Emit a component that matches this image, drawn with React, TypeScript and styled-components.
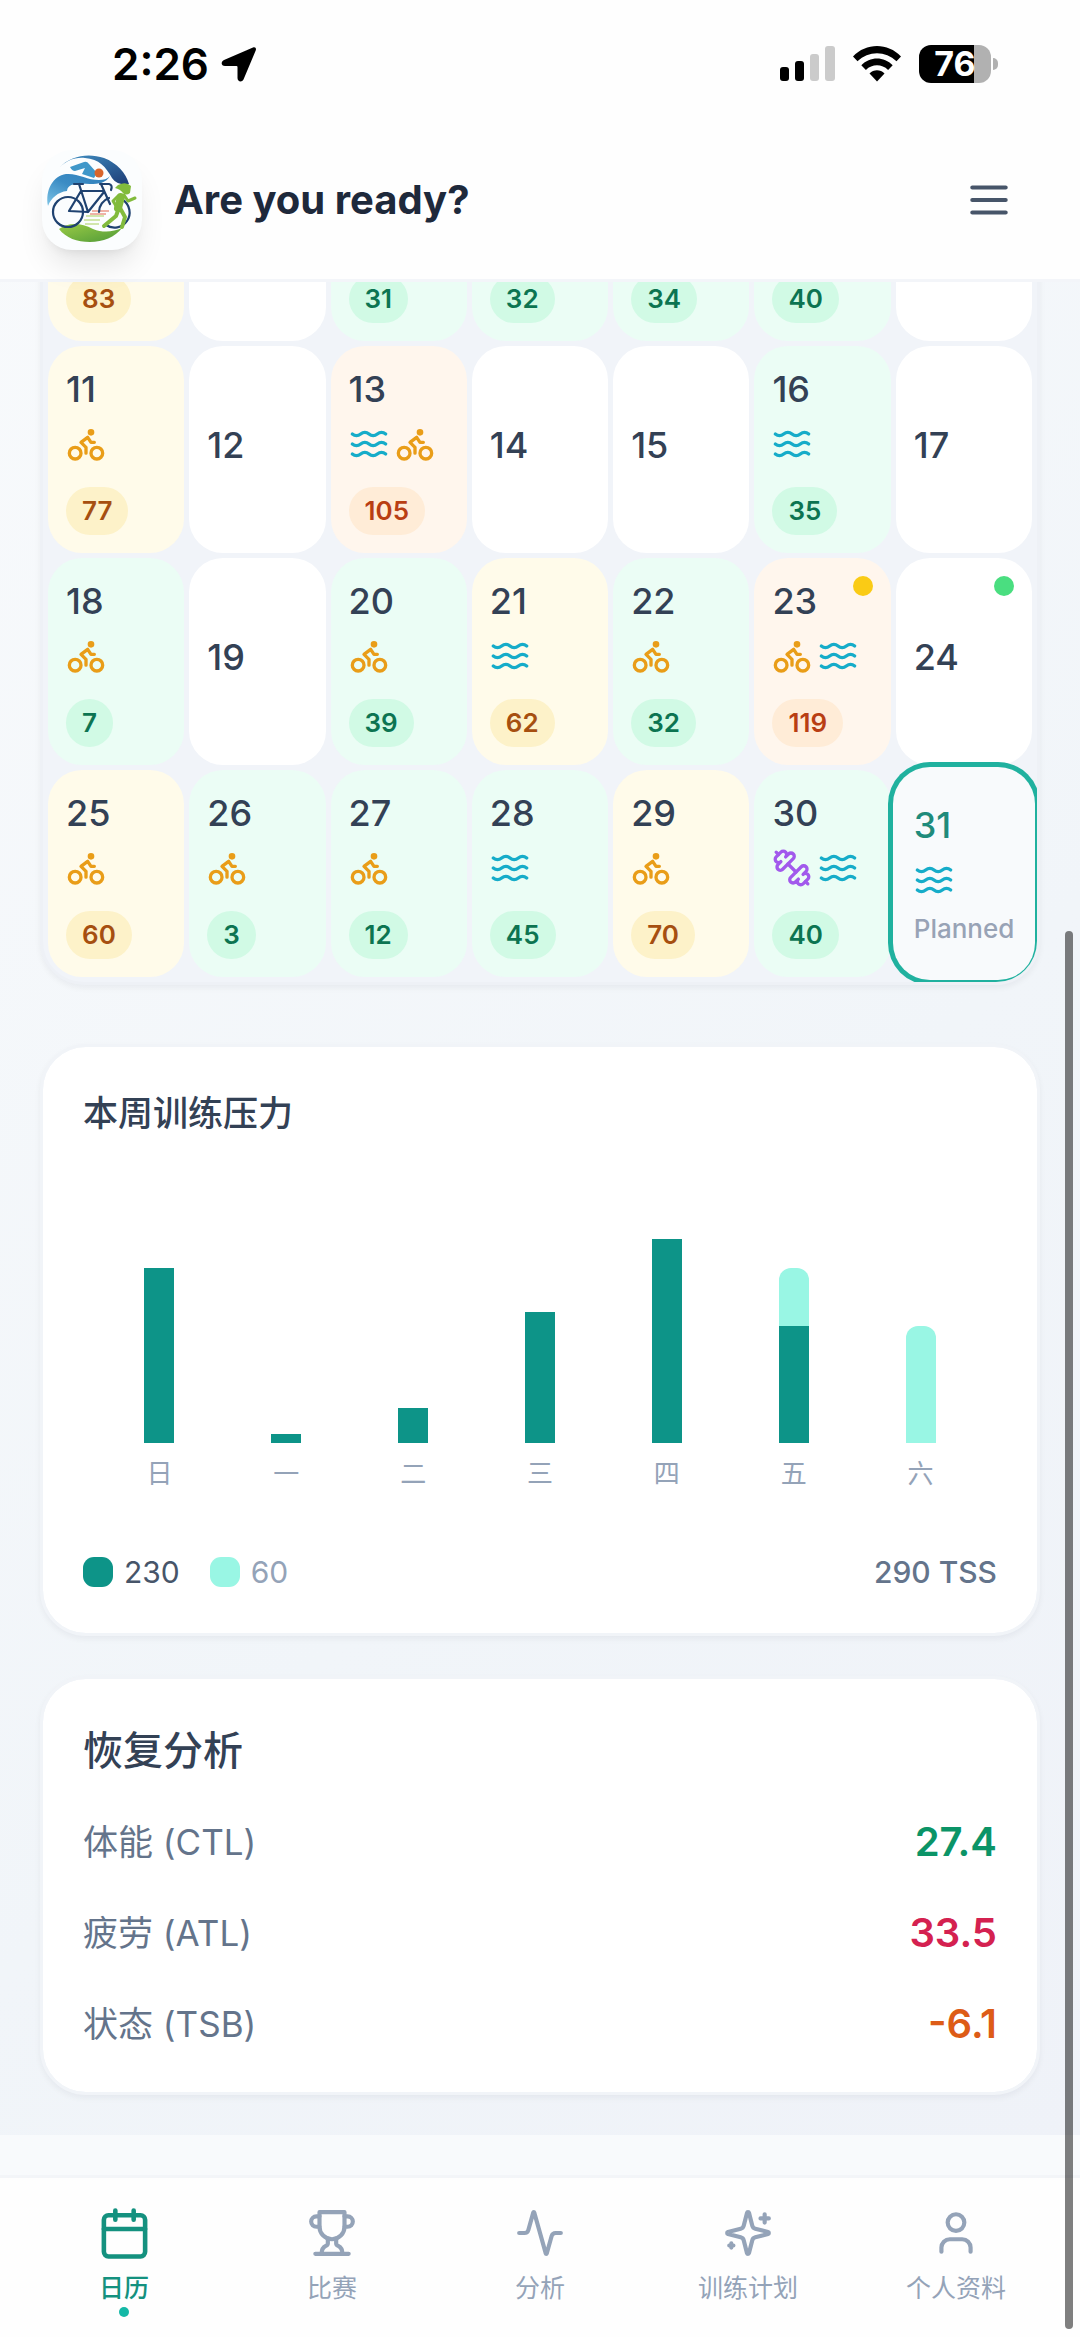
import React, { useLayoutEffect, useRef } from 'react';
import styled, { createGlobalStyle, css } from 'styled-components';

const GlobalStyle = createGlobalStyle`
  * { box-sizing: border-box; }
  html, body { margin: 0; padding: 0; }
  body {
    background: #f8fafc;
    color: #334155;
    font-family: Inter, "Noto Sans CJK SC", sans-serif;
    -webkit-font-smoothing: antialiased;
  }
  button { font: inherit; color: inherit; border: 0; background: none; padding: 0; cursor: pointer; }
  h1, h2, p, dl, dt, dd, ul { margin: 0; padding: 0; }
  svg { display: block; flex: none; }
`;

/* ---------- icons ---------- */

type IconName =
  | 'bike' | 'swim' | 'gym' | 'menu'
  | 'calendar' | 'trophy' | 'activity' | 'sparkles' | 'user';

const shapes: Record<IconName, React.ReactNode> = {
  bike: (
    <>
      <circle cx="18.5" cy="17.5" r="3.5" />
      <circle cx="5.5" cy="17.5" r="3.5" />
      <circle cx="15" cy="5" r="1" />
      <path d="M12 17.5V14l-3-3 4-3 2 3h2" />
    </>
  ),
  swim: (
    <>
      <path d="M2 6c.6.5 1.2 1 2.5 1C7 7 7 5 9.5 5c2.6 0 2.4 2 5 2 2.5 0 2.5-2 5-2 1.3 0 1.9.5 2.5 1" />
      <path d="M2 12c.6.5 1.2 1 2.5 1 2.5 0 2.5-2 5-2 2.6 0 2.4 2 5 2 2.5 0 2.5-2 5-2 1.3 0 1.9.5 2.5 1" />
      <path d="M2 18c.6.5 1.2 1 2.5 1 2.5 0 2.5-2 5-2 2.6 0 2.4 2 5 2 2.5 0 2.5-2 5-2 1.3 0 1.9.5 2.5 1" />
    </>
  ),
  gym: (
    <>
      <path d="M14.4 14.4 9.6 9.6" />
      <path d="M18.657 21.485a2 2 0 1 1-2.829-2.828l-1.767 1.768a2 2 0 1 1-2.829-2.829l6.364-6.364a2 2 0 1 1 2.829 2.829l-1.768 1.767a2 2 0 1 1 2.828 2.829z" />
      <path d="m21.5 21.5-1.4-1.4" />
      <path d="M3.9 3.9 2.5 2.5" />
      <path d="M6.404 12.768a2 2 0 1 1-2.829-2.829l1.768-1.767a2 2 0 1 1-2.828-2.829l2.828-2.828a2 2 0 1 1 2.829 2.828l1.767-1.768a2 2 0 1 1 2.829 2.829z" />
    </>
  ),
  menu: <path d="M4 6h16M4 12h16M4 18h16" />,
  calendar: (
    <>
      <path d="M8 2v4M16 2v4M3 10h18" />
      <rect width="18" height="18" x="3" y="4" rx="2" />
    </>
  ),
  trophy: (
    <>
      <path d="M6 9H4.5a2.5 2.5 0 0 1 0-5H6M18 9h1.5a2.5 2.5 0 0 0 0-5H18M4 22h16" />
      <path d="M10 14.66V17c0 .55-.47.98-.97 1.21C7.85 18.75 7 20.24 7 22" />
      <path d="M14 14.66V17c0 .55.47.98.97 1.21C16.15 18.75 17 20.24 17 22" />
      <path d="M18 2H6v7a6 6 0 0 0 12 0V2Z" />
    </>
  ),
  activity: (
    <path d="M22 12h-2.48a2 2 0 0 0-1.93 1.46l-2.35 8.36a.25.25 0 0 1-.48 0L9.24 2.18a.25.25 0 0 0-.48 0l-2.35 8.36A2 2 0 0 1 4.49 12H2" />
  ),
  sparkles: (
    <>
      <path d="M9.937 15.5A2 2 0 0 0 8.5 14.063l-6.135-1.582a.5.5 0 0 1 0-.962L8.5 9.936A2 2 0 0 0 9.937 8.5l1.582-6.135a.5.5 0 0 1 .963 0L14.063 8.5A2 2 0 0 0 15.5 9.937l6.135 1.581a.5.5 0 0 1 0 .964L15.5 14.063a2 2 0 0 0-1.437 1.437l-1.582 6.135a.5.5 0 0 1-.963 0z" />
      <path d="M20 3v4M22 5h-4M4 17v2M5 18H3" />
    </>
  ),
  user: (
    <>
      <path d="M19 21v-2a4 4 0 0 0-4-4H9a4 4 0 0 0-4 4v2" />
      <circle cx="12" cy="7" r="4" />
    </>
  ),
};

const iconColors: Partial<Record<IconName, string>> = {
  bike: '#e99d18',
  swim: '#16acc9',
  gym: '#a259ec',
};

function Icon({ name, size, strokeWidth = 2 }: { name: IconName; size: number; strokeWidth?: number }) {
  return (
    <svg
      width={size}
      height={size}
      viewBox="0 0 24 24"
      fill="none"
      stroke={iconColors[name] ?? 'currentColor'}
      strokeWidth={strokeWidth}
      strokeLinecap="round"
      strokeLinejoin="round"
      aria-hidden="true"
    >
      {shapes[name]}
    </svg>
  );
}

function LogoArt() {
  return (
    <svg width="100" height="100" viewBox="0 0 100 100" fill="none" aria-hidden="true">
      <defs>
        <linearGradient id="sky" x1="0" y1="0" x2="1" y2="1">
          <stop offset="0" stopColor="#3f92c6" />
          <stop offset="1" stopColor="#1f3c75" />
        </linearGradient>
        <linearGradient id="wave" x1="1" y1="0" x2="0" y2="1">
          <stop offset="0" stopColor="#2f7fbb" />
          <stop offset="0.5" stopColor="#3b8cc4" />
          <stop offset="1" stopColor="#7cc4e6" />
        </linearGradient>
        <linearGradient id="hill" x1="0" y1="0" x2="1" y2="1">
          <stop offset="0" stopColor="#9bcb45" />
          <stop offset="1" stopColor="#4f9a38" />
        </linearGradient>
      </defs>
      <path d="M17 18C29 5 47 3 62 8c13 5 22 15 25 26-6 1-13 0-17-6C64 17 57 9 43 8c-11-1-19 3-26 10Z" fill="url(#sky)" />
      <path d="M28 17 42 12q3-1 5 2l8 9-3 5-12-4 3-6-10 3q-3 0-5-4Z" fill="#3f97c9" />
      <circle cx="57" cy="23" r="4.5" fill="#d9652b" />
      <path d="M6 56C3 40 11 26 24 24c12-1 21 6 33 6 5 0 8-1 11-4-4 7-11 8-20 8-10 0-22-2-23 7-9 1-16 7-19 15Z" fill="url(#wave)" />
      <path d="M17 79c10-7 22-6 34 0 10 4 20 3 29-1-7 9-19 14-32 14S24 88 17 79Z" fill="url(#hill)" />
      <path d="M44 66h18M42 70h16M43 74h14" stroke="#a9cf5a" strokeWidth="1" />
      <path d="M50 61h17M48 64h16" stroke="#e2664f" strokeWidth="1" />
      <g stroke="#1f4270" strokeWidth="2.2" strokeLinecap="round" strokeLinejoin="round">
        <circle cx="26" cy="62" r="15" />
        <path d="M81 50a15 15 0 1 1-17 25M57 62a15 15 0 0 1 10-14" />
        <path d="M32 34h9M37 34l9 28 16-20M39 41h22M39 41 27 61l19 1M59 34l9 20M58 34h9q4 1 2 6" />
      </g>
      <g stroke="#82bb3c" strokeLinecap="round" strokeLinejoin="round">
        <path d="M79 47 76 58" strokeWidth="8" />
        <path d="M77 58l-3 8-12 10M78 58l5 9-3 10" strokeWidth="4" />
        <path d="M77 45l-6 6 3 5M82 45l4 6 7-3" strokeWidth="3" />
      </g>
      <path d="M76 35q8-4 13 1l-1 7q-4 3-7 0-3-4-8-5 2-2 3-3Z" fill="#82bb3c" />
    </svg>
  );
}

/* ---------- shell ---------- */

const Shell = styled.div`
  display: flex;
  flex-direction: column;
  height: 100vh;
  overflow: hidden;
`;

const Header = styled.header`
  position: relative;
  z-index: 1;
  flex: none;
  background: #fefefe;
  border-bottom: 3px solid #f3f5f9;
`;

const StatusBar = styled.div`
  display: flex;
  align-items: center;
  justify-content: space-between;
  height: 128px;
  padding: 0 82px 0 112px;
  color: #000;
`;

const Clock = styled.div`
  display: flex;
  align-items: center;
  gap: 12px;
  font-size: 44px;
  line-height: 52px;
  font-weight: 600;
`;

const StatusIcons = styled.div`
  display: flex;
  align-items: center;
  gap: 18px;
`;

const Battery = styled.div`
  display: flex;
  align-items: center;
  gap: 2px;
`;

const BatteryBody = styled.div`
  display: flex;
  align-items: center;
  justify-content: center;
  width: 72px;
  height: 38px;
  border-radius: 12px;
  background: linear-gradient(90deg, #000 76%, #b1b1b1 76%);
  color: #fff;
  font-size: 34px;
  line-height: 38px;
  font-weight: 700;
`;

const BatteryTip = styled.div`
  width: 5px;
  height: 12px;
  border-radius: 0 6px 6px 0;
  background: #b1b1b1;
`;

const TitleRow = styled.div`
  display: flex;
  align-items: center;
  gap: 32px;
  padding: 21px 40px 28px 42px;
`;

const Logo = styled.div`
  width: 100px;
  height: 100px;
  border-radius: 30px;
  background: #fbfdfe;
  box-shadow: 0 20px 30px -6px rgba(0, 0, 0, 0.1), 0 8px 12px -8px rgba(0, 0, 0, 0.1);
`;

const AppTitle = styled.h1`
  flex: 1;
  color: #1e293b;
  font-size: 40px;
  line-height: 52px;
  font-weight: 700;
`;

const MenuButton = styled.button`
  display: flex;
  padding: 26px;
  color: #475569;
`;

const Scroller = styled.main`
  flex: 1;
  min-height: 0;
  overflow-y: auto;
  scrollbar-width: none;
  padding-bottom: 40px;
`;

const Content = styled.div`
  display: flex;
  flex-direction: column;
  padding: 0 40px 40px;
  background: linear-gradient(135deg, #f8fafc 0%, #f1f5f9 60%, #eff2f8 100%);
`;

const ScrollThumb = styled.div`
  position: fixed;
  right: 7px;
  top: 931px;
  bottom: 8px;
  z-index: 2;
  width: 8px;
  border-radius: 4px;
  background: rgba(0, 0, 0, 0.5);
`;

/* ---------- calendar ---------- */

const Calendar = styled.section`
  display: grid;
  grid-template-columns: repeat(7, 1fr);
  grid-auto-rows: 207px;
  gap: 5px;
  padding: 5px;
  margin-bottom: 59px;
  overflow: hidden;
  border: 3px solid #eef1f6;
  border-radius: 44px;
  background: #f1f4f9;
  box-shadow: 0 3px 6px rgba(15, 23, 42, 0.05);
`;

type Tone = 'rest' | 'easy' | 'medium' | 'hard' | 'today';

const cellTones: Record<Tone, string> = {
  rest: '#ffffff',
  easy: '#ebfdf5',
  medium: '#fffbea',
  hard: '#fff6ed',
  today: '#f8fafc',
};

const badgeTones: Record<Tone, { bg: string; fg: string }> = {
  rest: { bg: '#f1f5f9', fg: '#475569' },
  easy: { bg: '#d1fae5', fg: '#0c7451' },
  medium: { bg: '#fdf2c9', fg: '#a64f10' },
  hard: { bg: '#ffecd7', fg: '#b93e13' },
  today: { bg: '#f1f5f9', fg: '#475569' },
};

const Cell = styled.button<{ $tone: Tone; $bottom?: boolean }>`
  position: relative;
  display: flex;
  flex-direction: column;
  align-items: flex-start;
  justify-content: ${(p) => (p.$bottom ? 'flex-end' : 'center')};
  min-width: 0;
  padding: 18px;
  border-radius: 34px;
  background: ${(p) => cellTones[p.$tone]};
  ${(p) =>
    p.$tone === 'today' &&
    css`
      color: #1f8b7b;
      box-shadow: 0 0 0 3px #f8fafc, 0 0 0 8px #20b19f;
    `}
`;

const DayNumber = styled.span`
  margin-bottom: 10px;
  font-size: 36px;
  line-height: 50px;
  font-weight: 500;
`;

const Sports = styled.span`
  display: flex;
  gap: 6px;
`;

const Load = styled.span<{ $tone: Tone }>`
  margin-top: 23px;
  padding: 0 16px;
  border-radius: 24px;
  background: ${(p) => badgeTones[p.$tone].bg};
  color: ${(p) => badgeTones[p.$tone].fg};
  font-size: 26px;
  line-height: 48px;
  font-weight: 600;
`;

const Planned = styled.span`
  margin-top: 10px;
  color: #98a3b6;
  font-size: 26px;
  line-height: 37px;
  font-weight: 500;
`;

const RaceDot = styled.i<{ $color: string }>`
  position: absolute;
  top: 18px;
  right: 18px;
  width: 20px;
  height: 20px;
  border-radius: 50%;
  background: ${(p) => p.$color};
`;

interface Day {
  date?: number;
  tone: Tone;
  sports?: IconName[];
  load?: number;
  dot?: string;
}

const days: Day[] = [
  { tone: 'medium', load: 83 },
  { tone: 'rest' },
  { tone: 'easy', load: 31 },
  { tone: 'easy', load: 32 },
  { tone: 'easy', load: 34 },
  { tone: 'easy', load: 40 },
  { tone: 'rest' },
  { date: 11, tone: 'medium', sports: ['bike'], load: 77 },
  { date: 12, tone: 'rest' },
  { date: 13, tone: 'hard', sports: ['swim', 'bike'], load: 105 },
  { date: 14, tone: 'rest' },
  { date: 15, tone: 'rest' },
  { date: 16, tone: 'easy', sports: ['swim'], load: 35 },
  { date: 17, tone: 'rest' },
  { date: 18, tone: 'easy', sports: ['bike'], load: 7 },
  { date: 19, tone: 'rest' },
  { date: 20, tone: 'easy', sports: ['bike'], load: 39 },
  { date: 21, tone: 'medium', sports: ['swim'], load: 62 },
  { date: 22, tone: 'easy', sports: ['bike'], load: 32 },
  { date: 23, tone: 'hard', sports: ['bike', 'swim'], load: 119, dot: '#facb15' },
  { date: 24, tone: 'rest', dot: '#4ade80' },
  { date: 25, tone: 'medium', sports: ['bike'], load: 60 },
  { date: 26, tone: 'easy', sports: ['bike'], load: 3 },
  { date: 27, tone: 'easy', sports: ['bike'], load: 12 },
  { date: 28, tone: 'easy', sports: ['swim'], load: 45 },
  { date: 29, tone: 'medium', sports: ['bike'], load: 70 },
  { date: 30, tone: 'easy', sports: ['gym', 'swim'], load: 40 },
  { date: 31, tone: 'today', sports: ['swim'] },
];

function DayCell({ day }: { day: Day }) {
  return (
    <Cell type="button" $tone={day.tone} $bottom={!day.date}>
      {day.date && <DayNumber>{day.date}</DayNumber>}
      {day.sports && (
        <Sports>
          {day.sports.map((s) => (
            <Icon key={s} name={s} size={40} />
          ))}
        </Sports>
      )}
      {day.load !== undefined && <Load $tone={day.tone}>{day.load}</Load>}
      {day.tone === 'today' && <Planned>Planned</Planned>}
      {day.dot && <RaceDot $color={day.dot} />}
    </Cell>
  );
}

/* ---------- cards ---------- */

const Card = styled.section`
  padding: 40px;
  border: 3px solid #f1f4f8;
  border-radius: 46px;
  background: #fff;
  background-clip: padding-box;
  box-shadow: 0 3px 6px rgba(15, 23, 42, 0.05);

  & + & {
    margin-top: 40px;
  }
`;

const ChartTitle = styled.h2`
  font-size: 35px;
  line-height: 52px;
  font-weight: 500;
`;

const Chart = styled.div`
  display: grid;
  grid-template-columns: repeat(7, 1fr);
  margin: 40px 13px 59px;
`;

const ChartColumn = styled.div`
  display: flex;
  flex-direction: column;
  align-items: center;
  justify-content: flex-end;
  height: 313px;
`;

const Bar = styled.div<{ $planned?: boolean }>`
  width: 30px;
  background: ${(p) => (p.$planned ? '#99f6e4' : '#0d9488')};
  border-radius: ${(p) => (p.$planned ? '12px 12px 0 0' : '0')};
`;

const Weekday = styled.span`
  margin-top: 13px;
  color: #94a3b8;
  font-size: 26px;
  line-height: 36px;
`;

const ChartFooter = styled.div`
  display: flex;
  align-items: center;
  justify-content: space-between;
  font-size: 30px;
  line-height: 42px;
`;

const Legend = styled.div`
  display: flex;
  gap: 30px;
`;

const LegendItem = styled.span<{ $planned?: boolean }>`
  display: flex;
  align-items: center;
  gap: 11px;
  color: ${(p) => (p.$planned ? '#94a3b8' : '#475569')};

  &::before {
    content: '';
    width: 30px;
    height: 30px;
    border-radius: 11px;
    background: ${(p) => (p.$planned ? '#99f6e4' : '#0d9488')};
  }
`;

const Total = styled.strong`
  color: #64748b;
  font-weight: 500;
`;

const PX_PER_TSS = 2.92;

const week = [
  { label: '日', done: 60, planned: 0 },
  { label: '一', done: 3, planned: 0 },
  { label: '二', done: 12, planned: 0 },
  { label: '三', done: 45, planned: 0 },
  { label: '四', done: 70, planned: 0 },
  { label: '五', done: 40, planned: 20 },
  { label: '六', done: 0, planned: 40 },
];

const doneTotal = week.reduce((sum, d) => sum + d.done, 0);
const plannedTotal = week.reduce((sum, d) => sum + d.planned, 0);

const RecoveryTitle = styled.h2`
  margin-bottom: 31px;
  font-size: 40px;
  line-height: 64px;
  font-weight: 500;
`;

const Metrics = styled.dl`
  display: flex;
  flex-direction: column;
  gap: 35px;
`;

const Metric = styled.div`
  display: flex;
  align-items: center;
  justify-content: space-between;
`;

const MetricName = styled.dt`
  color: #64748b;
  font-size: 35px;
  line-height: 56px;
`;

const MetricValue = styled.dd<{ $color: string }>`
  color: ${(p) => p.$color};
  font-size: 40px;
  line-height: 56px;
  font-weight: 600;
`;

const metrics = [
  { name: '体能 (CTL)', value: '27.4', color: '#0b9467' },
  { name: '疲劳 (ATL)', value: '33.5', color: '#d42150' },
  { name: '状态 (TSB)', value: '-6.1', color: '#dd5c17' },
];

/* ---------- bottom navigation ---------- */

const Nav = styled.nav`
  flex: none;
  display: grid;
  grid-template-columns: repeat(5, 1fr);
  height: 162px;
  padding: 27px 20px 0;
  border-top: 3px solid #f3f5f8;
  background: #fefefe;
`;

const NavLink = styled.a<{ $active?: boolean }>`
  display: flex;
  flex-direction: column;
  align-items: center;
  color: ${(p) => (p.$active ? '#14917f' : '#94a3b8')};
  font-size: 25px;
  line-height: 30px;
  font-weight: ${(p) => (p.$active ? 500 : 400)};
  text-decoration: none;
`;

const NavIcon = styled.span`
  display: flex;
  align-items: center;
  height: 56px;
  margin-bottom: 12px;
`;

const ActiveDot = styled.i`
  width: 10px;
  height: 10px;
  margin-top: 4px;
  border-radius: 50%;
  background: #14b8a6;
`;

const tabs: { icon: IconName; label: string; active?: boolean }[] = [
  { icon: 'calendar', label: '日历', active: true },
  { icon: 'trophy', label: '比赛' },
  { icon: 'activity', label: '分析' },
  { icon: 'sparkles', label: '训练计划' },
  { icon: 'user', label: '个人资料' },
];

export default function App() {
  const scroller = useRef<HTMLElement>(null);

  useLayoutEffect(() => {
    const el = scroller.current;
    if (el) el.scrollTop = el.scrollHeight;
  }, []);

  return (
    <Shell>
      <GlobalStyle />
      <Header>
        <StatusBar>
          <Clock>
            <span>2:26</span>
            <svg width="36" height="36" viewBox="0 0 36 36" aria-hidden="true">
              <path d="M32 1.500 3 14C-.5 15.800 0 20 4 20h11.500q1 0 1 1v11c0 4 4.500 4.500 6 1.500L34.700 4.500c1-2.500-.7-4-2.700-3Z" fill="#000" />
            </svg>
          </Clock>
          <StatusIcons>
            <svg width="55" height="36" viewBox="0 0 55 36" aria-hidden="true">
              <rect x="0" y="21" width="9" height="14" rx="3" fill="#000" />
              <rect x="15" y="15" width="9" height="20" rx="3" fill="#000" />
              <rect x="30" y="8" width="9" height="27" rx="3" fill="#cbcbcb" />
              <rect x="45" y="0" width="10" height="35" rx="3" fill="#cbcbcb" />
            </svg>
            <svg width="48" height="36" viewBox="0 0 48 36" aria-hidden="true">
              <path d="M0 10.500C13-3.500 35-3.500 48 10.500l-4.500 4.800C32.500 4.500 15.500 4.500 4.500 15.300Z" fill="#000" />
              <path d="M8.300 19.200c8.700-9 22.700-9 31.400 0l-4.600 4.700c-6.200-6.200-16-6.200-22.200 0Z" fill="#000" />
              <path d="M16.500 27.500c4.200-4.200 10.800-4.200 15 0L24 35.500Z" fill="#000" />
            </svg>
            <Battery>
              <BatteryBody>76</BatteryBody>
              <BatteryTip />
            </Battery>
          </StatusIcons>
        </StatusBar>
        <TitleRow>
          <Logo>
            <LogoArt />
          </Logo>
          <AppTitle>Are you ready?</AppTitle>
          <MenuButton type="button" aria-label="Menu">
            <Icon name="menu" size={50} />
          </MenuButton>
        </TitleRow>
      </Header>

      <Scroller ref={scroller}>
        <Content>
          <Calendar>
            {days.map((day, i) => (
              <DayCell key={i} day={day} />
            ))}
          </Calendar>

          <Card>
            <ChartTitle>本周训练压力</ChartTitle>
            <Chart>
              {week.map((d) => (
                <ChartColumn key={d.label}>
                  {d.planned > 0 && <Bar $planned style={{ height: d.planned * PX_PER_TSS }} />}
                  {d.done > 0 && <Bar style={{ height: d.done * PX_PER_TSS }} />}
                  <Weekday>{d.label}</Weekday>
                </ChartColumn>
              ))}
            </Chart>
            <ChartFooter>
              <Legend>
                <LegendItem>{doneTotal}</LegendItem>
                <LegendItem $planned>{plannedTotal}</LegendItem>
              </Legend>
              <Total>{doneTotal + plannedTotal} TSS</Total>
            </ChartFooter>
          </Card>

          <Card>
            <RecoveryTitle>恢复分析</RecoveryTitle>
            <Metrics>
              {metrics.map((m) => (
                <Metric key={m.name}>
                  <MetricName>{m.name}</MetricName>
                  <MetricValue $color={m.color}>{m.value}</MetricValue>
                </Metric>
              ))}
            </Metrics>
          </Card>
        </Content>
      </Scroller>

      <Nav>
        {tabs.map((t) => (
          <NavLink key={t.label} href="#" $active={t.active}>
            <NavIcon>
              <Icon name={t.icon} size={t.active ? 55 : 50} />
            </NavIcon>
            {t.label}
            {t.active && <ActiveDot />}
          </NavLink>
        ))}
      </Nav>
      <ScrollThumb />
    </Shell>
  );
}
